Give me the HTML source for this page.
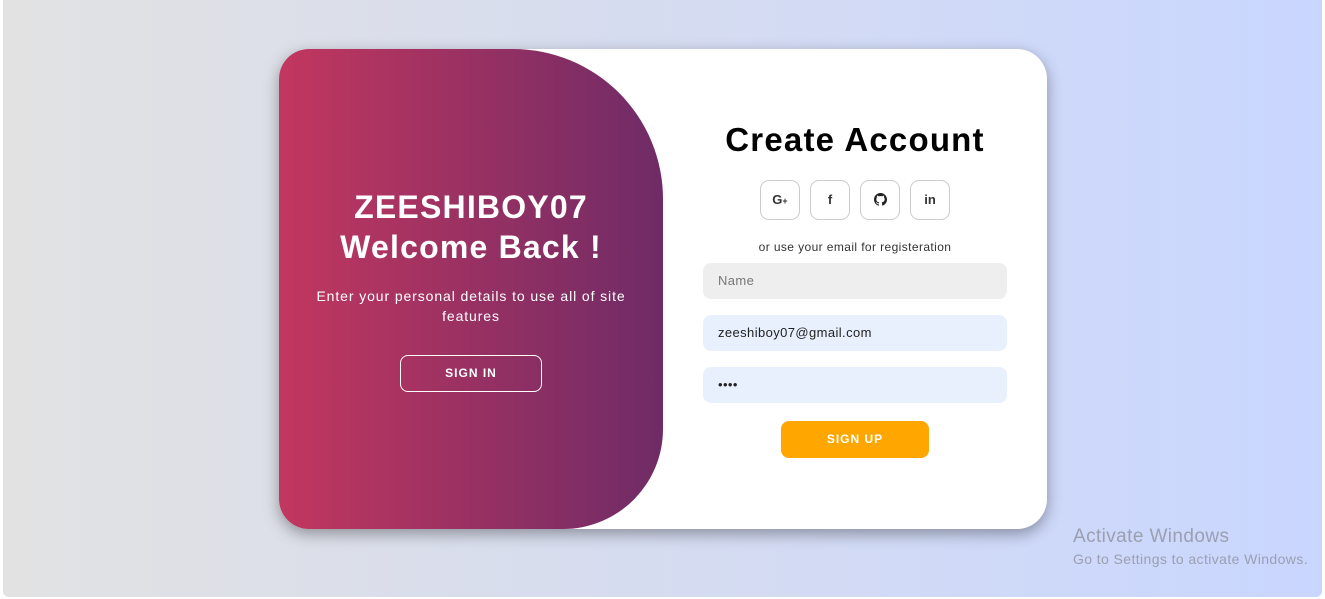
<!DOCTYPE html>
<html><head><style>
*{margin:0;padding:0;box-sizing:border-box}
body{width:1325px;height:599px;background:#fff;font-family:"Liberation Sans",sans-serif;overflow:hidden;position:relative}
.bg{position:absolute;left:3px;top:0;width:1319px;height:597px;background:linear-gradient(to right,#e2e2e2,#c9d6ff);border-radius:0 0 6px 6px}
.card{position:absolute;left:279px;top:49px;width:768px;height:480px;background:#fff;border-radius:30px;box-shadow:0 5px 15px rgba(0,0,0,.35);overflow:hidden}
.left{position:absolute;left:0;top:0;width:384px;height:480px;background:linear-gradient(to right,#c2375f,#6f2b66);border-radius:0 150px 100px 0;color:#fff;text-align:center}
.left h1{position:absolute;top:138px;left:0;width:384px;font-size:32px;line-height:40px;font-weight:bold;letter-spacing:1.2px}
.left p{position:absolute;top:237px;left:20px;width:344px;font-size:14px;line-height:20px;letter-spacing:.9px}
.si{position:absolute;left:121px;top:306px;width:142px;height:37px;border:1px solid #fff;border-radius:8px;font-size:12px;font-weight:bold;line-height:35px;letter-spacing:1px}
.right{position:absolute;left:424px;top:0;width:304px;text-align:center}
.right h2{position:absolute;top:72px;left:-20px;width:344px;font-size:33px;font-weight:bold;color:#000;letter-spacing:1.2px}
.ic{position:absolute;top:131px;width:40px;height:40px;border:1px solid #ccc;border-radius:9px;font-size:13px;font-weight:bold;line-height:38px;color:#333}
.or{position:absolute;top:191px;left:0;width:304px;font-size:12px;color:#333;letter-spacing:.4px}
.in{position:absolute;left:0;width:304px;height:36px;border-radius:8px;text-align:left;padding-left:15px;font-size:13px;line-height:36px;color:#222;letter-spacing:.4px}
.su{position:absolute;left:78px;top:372px;width:148px;height:37px;background:#ffa600;border-radius:8px;color:#fff;font-size:12px;font-weight:bold;line-height:37px;letter-spacing:1px}
.aw{position:absolute;left:1073px;top:526px;color:#9aa0b0;font-size:19px;letter-spacing:.4px}
.aw2{position:absolute;left:1073px;top:551px;color:#9aa0b0;font-size:14px;letter-spacing:.4px}
</style></head><body>
<div class="bg"></div>
<div class="card">
 <div class="left">
  <h1>ZEESHIBOY07<br>Welcome Back !</h1>
  <p>Enter your personal details to use all of site features</p>
  <div class="si">SIGN IN</div>
 </div>
 <div class="right">
  <h2>Create Account</h2>
  <div class="ic" style="left:57px">G<span style="font-size:9px">+</span></div>
  <div class="ic" style="left:107px">f</div>
  <div class="ic" style="left:157px"><svg width="13" height="13" viewBox="0 0 16 16" style="vertical-align:-2px"><path fill="#222" d="M8 0C3.6 0 0 3.6 0 8c0 3.5 2.3 6.5 5.5 7.6.4.1.5-.2.5-.4v-1.4c-2.2.5-2.7-1-2.7-1-.4-.9-.9-1.200-.9-1.2-.7-.5.1-.5.1-.5.8.1 1.2.8 1.2.8.7 1.3 1.9.9 2.3.7.1-.5.3-.9.5-1.1-1.8-.2-3.6-.9-3.6-4 0-.9.3-1.6.8-2.1-.1-.2-.4-1 .1-2.1 0 0 .7-.2 2.2.8.6-.2 1.3-.3 2-.3s1.4.1 2 .3c1.5-1 2.2-.8 2.2-.8.4 1.1.2 1.9.1 2.1.5.6.8 1.3.8 2.1 0 3.1-1.9 3.7-3.6 3.900.3.3.5.8.5 1.5v2.2c0 .2.1.5.6.4C13.7 14.5 16 11.5 16 8c0-4.4-3.6-8-8-8z"/></svg></div>
  <div class="ic" style="left:207px">in</div>
  <div class="or">or use your email for registeration</div>
  <div class="in" style="top:214px;background:#eee;color:#777">Name</div>
  <div class="in" style="top:266px;background:#e8f0fe">zeeshiboy07@gmail.com</div>
  <div class="in" style="top:318px;background:#e8f0fe">••••</div>
  <div class="su">SIGN UP</div>
 </div>
</div>
<div class="aw">Activate Windows</div>
<div class="aw2">Go to Settings to activate Windows.</div>
</body></html>
